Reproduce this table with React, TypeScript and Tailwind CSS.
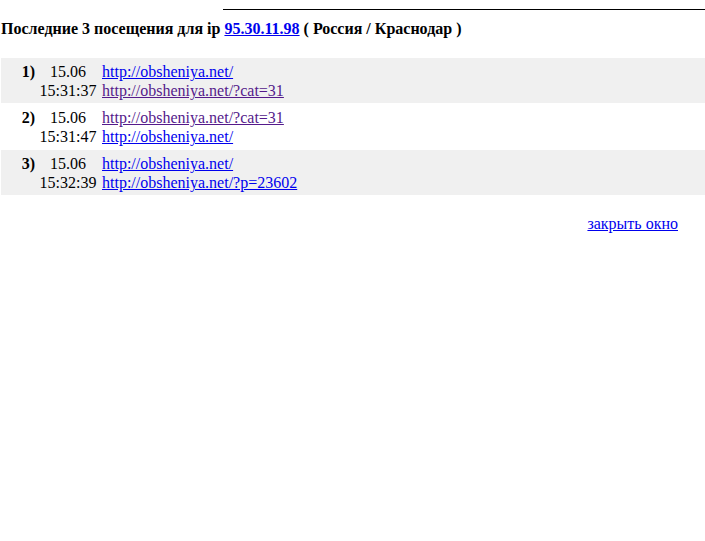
import React from 'react';

const visits = [
    { n: '1)', date: '15.06', time: '15:31:37', from: { href: 'http://obsheniya.net/', visited: false }, to: { href: 'http://obsheniya.net/?cat=31', visited: true }, shaded: true },
    { n: '2)', date: '15.06', time: '15:31:47', from: { href: 'http://obsheniya.net/?cat=31', visited: true }, to: { href: 'http://obsheniya.net/', visited: false }, shaded: false },
    { n: '3)', date: '15.06', time: '15:32:39', from: { href: 'http://obsheniya.net/', visited: false }, to: { href: 'http://obsheniya.net/?p=23602', visited: false }, shaded: true },
];

const Link: React.FC<{ href: string; visited: boolean }> = ({ href, visited }) => (
    <a href="#" className={visited ? 'text-[#551a8b] underline' : 'text-[#0000ee] underline'}>
        {href}
    </a>
);

export default function App() {
    return (
        <div className="w-[705px] h-[541px] bg-white text-black text-[16px] font-['Liberation_Serif',serif]">
            {/* top rule */}
            <div className="pt-[9px] pl-[223px]">
                <div className="h-px bg-black" />
            </div>

            <h3 className="mt-[9px] ml-[1px] font-bold text-[16px] leading-[20px]">
                Последние 3 посещения для ip{' '}
                <a href="#" className="text-[#0000ee] underline">95.30.11.98</a> ( Россия / Краснодар )
            </h3>

            {/* visits */}
            <div className="mt-[19px] ml-[1px] flex flex-col gap-px">
                {visits.map((v) => (
                    <div key={v.n} className={`flex pt-[4px] pb-[3px] leading-[19px] ${v.shaded ? 'bg-[#f0f0f0]' : 'bg-white'}`}>
                        <div className="w-[34px] text-right font-bold">{v.n}</div>
                        <div className="w-[66px] text-center">
                            <div>{v.date}</div>
                            <div>{v.time}</div>
                        </div>
                        <div className="pl-[1px]">
                            <div><Link {...v.from} /></div>
                            <div><Link {...v.to} /></div>
                        </div>
                    </div>
                ))}
            </div>

            <div className="mt-[17px] pr-[27px] text-right">
                <a href="#" className="text-[#0000ee] underline">закрыть окно</a>
            </div>
        </div>
    );
}
